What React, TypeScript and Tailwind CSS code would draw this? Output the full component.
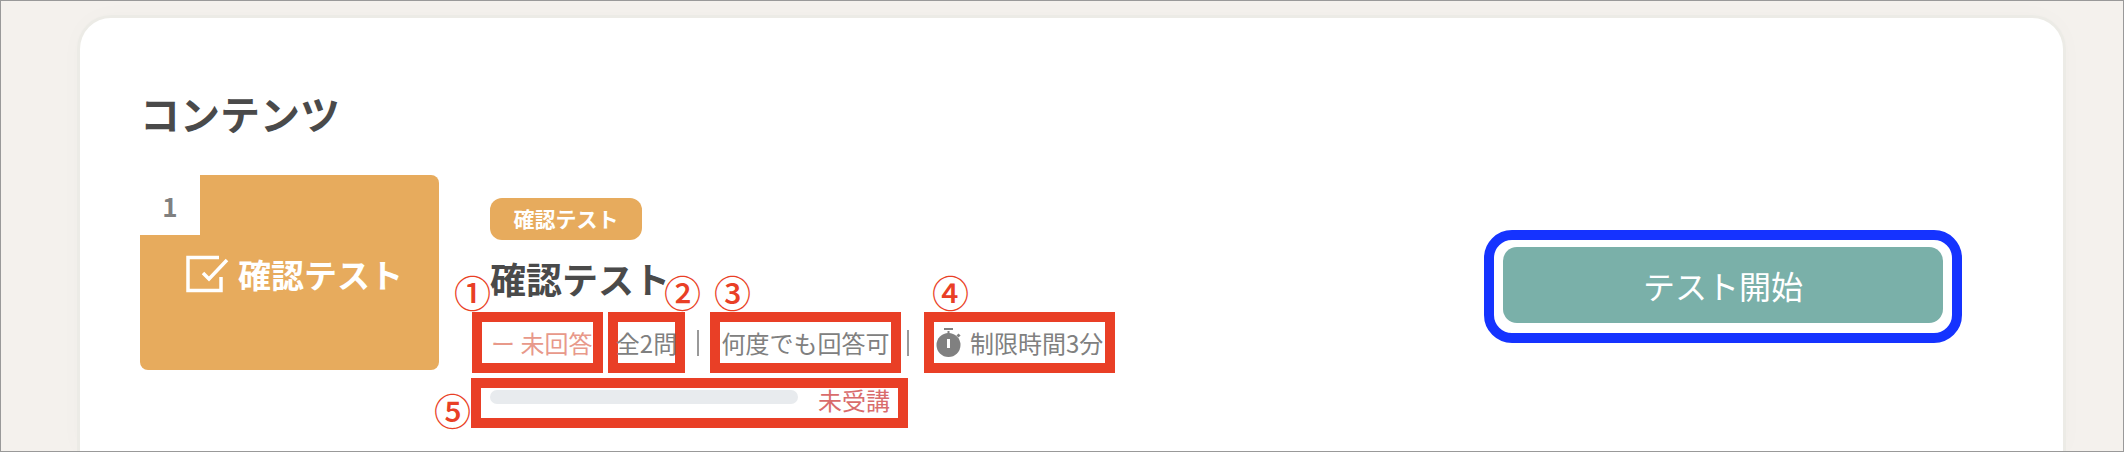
import React from "react";

const font = { fontFamily: '"Noto Sans CJK JP", sans-serif' };

function Num({ c, className }: { c: string; className: string }) {
  return (
    <span className={`absolute z-10 text-[37px] leading-[36px] font-medium text-[#e93f26] ${className}`}>{c}</span>
  );
}

function CheckIcon() {
  return (
    <svg width="44" height="38" viewBox="0 0 44 38" fill="none" stroke="#ffffff" className="shrink-0">
      <path d="M33 2.5 H2 V35.5 H35 V22" strokeWidth="3.5" />
      <path d="M17 18 L23 24 L41 5" strokeWidth="3.5" />
    </svg>
  );
}

function Timer() {
  return (
    <svg width="26" height="30" viewBox="0 0 26 30" fill="#808080" className="shrink-0">
      <rect x="8" y="0" width="9" height="2" />
      <circle cx="12.5" cy="17" r="12" />
      <rect x="11.5" y="3" width="2" height="3" />
      <rect x="21" y="6" width="3" height="3" transform="rotate(45 22.5 7.5)" />
      <rect x="11" y="11" width="3" height="9" fill="#ffffff" />
    </svg>
  );
}

export default function App() {
  return (
    <div
      style={font}
      className="w-[2124px] h-[452px] overflow-hidden border border-[#999999] bg-[#f4f1ed] pt-[14px] pl-[76px] pr-[57px] flex"
    >
      <div className="flex-1 bg-white border-[3px] border-b-0 border-[#ecebe6] rounded-t-[34px] pl-[60px] pt-[71px] pr-[101px] shadow-[0_0_24px_rgba(0,0,0,0.02)]">
        <h2 className="text-[40px] leading-[48px] font-bold text-[#4a4a4a]">コンテンツ</h2>
        <div className="flex mt-[38px]">
          <div className="relative w-[299px] h-[195px] rounded-[8px] bg-[#e7ab5d] flex items-center justify-center gap-[8px] shrink-0 pt-[2px] pl-[10px]">
            <div className="absolute top-0 left-0 w-[60px] h-[60px] bg-white flex items-center justify-center text-[26px] font-bold text-[#808080]">
              1
            </div>
            <CheckIcon />
            <span className="text-[33px] leading-[40px] font-bold text-white">確認テスト</span>
          </div>
          <div className="ml-[51px] pt-[23px] flex-1">
            <div className="w-[152px] h-[42px] rounded-[12px] bg-[#e7ab5d] flex items-center justify-center text-[21px] font-bold text-white">
              確認テスト
            </div>
            <div className="mt-[16px] text-[36px] leading-[44px] font-bold text-[#4a4a4a]">確認テスト</div>
            <div className="mt-[12px] -ml-[18px] flex items-center text-[24px] leading-[41px] text-[#808080]">
              <div className="relative w-[131px] h-[61px] border-[10px] border-[#e93f26] bg-white flex items-center pl-[9px] text-[#e8998a] whitespace-nowrap">
                <Num c="①" className="-left-[28px] -top-[48px]" />
                ー&nbsp;未回答
              </div>
              <div className="relative ml-[5px] w-[77px] h-[61px] border-[10px] border-[#e93f26] bg-white flex items-center justify-center whitespace-nowrap">
                <Num c="②" className="left-[46px] -top-[48px]" />
                全2問
              </div>
              <div className="ml-[12px] w-[2px] h-[26px] bg-[#999999]" />
              <div className="relative ml-[11px] w-[191px] h-[61px] border-[10px] border-[#e93f26] bg-white flex items-center justify-center whitespace-nowrap">
                <Num c="③" className="left-[-6px] -top-[48px]" />
                何度でも回答可
              </div>
              <div className="ml-[6px] w-[2px] h-[26px] bg-[#999999]" />
              <div className="relative ml-[15px] w-[191px] h-[61px] border-[10px] border-[#e93f26] bg-white flex items-center pl-[2px] gap-[8px] whitespace-nowrap">
                <Num c="④" className="left-[-2px] -top-[48px]" />
                <Timer />
                制限時間3分
              </div>
            </div>
            <div className="relative mt-[5px] -ml-[19px] w-[437px] h-[50px]">
              <Num c="⑤" className="-left-[37px] top-[14px]" />
              <div className="w-full h-full border-[10px] border-[#e93f26] bg-white overflow-hidden flex items-start pl-[9px] pt-[2px]">
                <div className="w-[308px] h-[14px] rounded-full bg-[#e8ebee]" />
                <span className="ml-[20px] -mt-[6px] text-[24px] leading-[32px] text-[#d96c6c] whitespace-nowrap">未受講</span>
              </div>
            </div>
          </div>
          <div className="shrink-0 mt-[55px] w-[478px] h-[113px] border-[10px] border-[#1533ff] rounded-[28px] pt-[7px] pb-[10px] px-[9px]">
            <button className="w-full h-full rounded-[14px] bg-[#7ab0a9] text-white text-[32px] leading-[40px]">
              テスト開始
            </button>
          </div>
        </div>
      </div>
    </div>
  );
}
